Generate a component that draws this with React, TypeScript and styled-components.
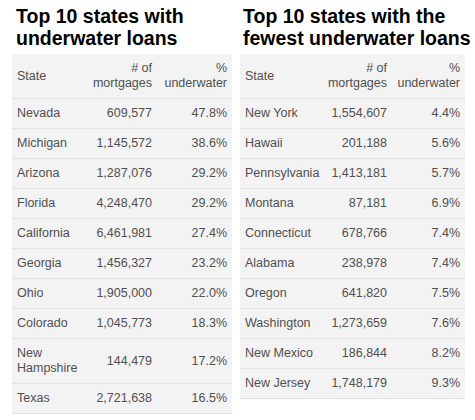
import React from "react";
import styled, { createGlobalStyle } from "styled-components";

const Global = createGlobalStyle`
  html, body { margin: 0; padding: 0; background: #ffffff; }
  body { font-family: "Liberation Sans", Arial, sans-serif; }
`;

const Page = styled.div`
  display: flex;
  align-items: flex-start;
  gap: 8px;
  padding: 5px 0 0 12px;
`;

const Column = styled.section<{ $width: number }>`
  width: ${(p) => p.$width}px;
  display: flex;
  flex-direction: column;
`;

const Title = styled.h2<{ $indent: number }>`
  margin: 0 0 5px 0;
  padding-left: ${(p) => p.$indent}px;
  font-family: "Liberation Sans", Arial, sans-serif;
  font-weight: bold;
  font-size: 19.5px;
  line-height: 22px;
  color: #000;
  white-space: nowrap;
`;

const Table = styled.div<{ $cols: string }>`
  display: grid;
  grid-template-columns: ${(p) => p.$cols};
  background: #f3f3f3;
  font-size: 12.5px;
  line-height: 15px;
  color: #505050;
`;

const Cell = styled.div<{ $align?: "left" | "right" }>`
  padding: 7px 5px;
  border-bottom: 1px solid #e3e3e3;
  text-align: ${(p) => p.$align ?? "left"};
  display: flex;
  align-items: center;
  justify-content: ${(p) => (p.$align === "right" ? "flex-end" : "flex-start")};
`;

type Row = [string, string, string];

const worst: Row[] = [
  ["Nevada", "609,577", "47.8%"],
  ["Michigan", "1,145,572", "38.6%"],
  ["Arizona", "1,287,076", "29.2%"],
  ["Florida", "4,248,470", "29.2%"],
  ["California", "6,461,981", "27.4%"],
  ["Georgia", "1,456,327", "23.2%"],
  ["Ohio", "1,905,000", "22.0%"],
  ["Colorado", "1,045,773", "18.3%"],
  ["New Hampshire", "144,479", "17.2%"],
  ["Texas", "2,721,638", "16.5%"],
];

const best: Row[] = [
  ["New York", "1,554,607", "4.4%"],
  ["Hawaii", "201,188", "5.6%"],
  ["Pennsylvania", "1,413,181", "5.7%"],
  ["Montana", "87,181", "6.9%"],
  ["Connecticut", "678,766", "7.4%"],
  ["Alabama", "238,978", "7.4%"],
  ["Oregon", "641,820", "7.5%"],
  ["Washington", "1,273,659", "7.6%"],
  ["New Mexico", "186,844", "8.2%"],
  ["New Jersey", "1,748,179", "9.3%"],
];

function StatesTable({
  title,
  rows,
  width,
  cols,
  indent,
}: {
  title: React.ReactNode;
  rows: Row[];
  width: number;
  cols: string;
  indent: number;
}) {
  return (
    <Column $width={width}>
      <Title $indent={indent}>{title}</Title>
      <Table $cols={cols}>
        <Cell>State</Cell>
        <Cell $align="right">
          # of
          <br />
          mortgages
        </Cell>
        <Cell $align="right">
          %
          <br />
          underwater
        </Cell>
        {rows.map(([s, m, u]) => (
          <React.Fragment key={s}>
            <Cell>{s}</Cell>
            <Cell $align="right">{m}</Cell>
            <Cell $align="right">{u}</Cell>
          </React.Fragment>
        ))}
      </Table>
    </Column>
  );
}

export default function App() {
  return (
    <>
      <Global />
      <Page>
        <StatesTable
          title={
            <>
              Top 10 states with
              <br />
              underwater loans
            </>
          }
          rows={worst}
          width={220}
          cols="73px 72px 75px"
          indent={4}
        />
        <StatesTable
          title={
            <>
              Top 10 states with the
              <br />
              fewest underwater loans
            </>
          }
          rows={best}
          width={225}
          cols="82px 70px 73px"
          indent={3}
        />
      </Page>
    </>
  );
}
